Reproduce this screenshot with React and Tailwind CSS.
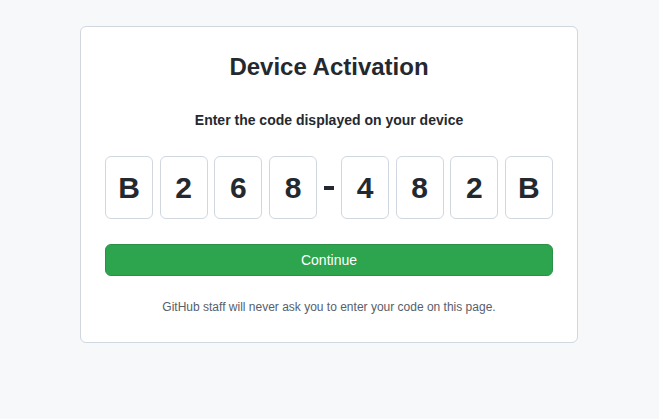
export default function App() {
  const left = ["B", "2", "6", "8"];
  const right = ["4", "8", "2", "B"];
  const Box = ({ c }) => (
    <div className="w-[48px] h-[63px] border border-[#d0d7de] rounded-[6px] bg-white flex items-center justify-center text-[30px] font-bold text-[#24292f]">
      {c}
    </div>
  );
  return (
    <div
      className="w-[659px] h-[419px] bg-[#f6f8fa] pt-[26px]"
      style={{ fontFamily: '"Liberation Sans", Arial, sans-serif' }}
    >
      <div className="ml-[80px] w-[498px] h-[317px] bg-white border border-[#d0d7de] rounded-[6px] px-[24px] pt-[25px]">
        <h1 className="text-center text-[24px] leading-[30px] font-bold text-[#24292f]">
          Device Activation
        </h1>
        <p className="mt-[28px] text-center text-[14px] leading-[21px] font-bold text-[#24292f]">
          Enter the code displayed on your device
        </p>
        <div className="mt-[25px] flex items-center">
          <div className="flex gap-[6.67px]">
            {left.map((c, i) => (
              <Box key={i} c={c} />
            ))}
          </div>
          <div className="w-[24px] flex justify-center">
            <div className="w-[10px] h-[4px] mt-[1px] bg-[#24292f]" />
          </div>
          <div className="flex gap-[6.67px]">
            {right.map((c, i) => (
              <Box key={i} c={c} />
            ))}
          </div>
        </div>
        <button className="mt-[25px] w-full h-[32px] bg-[#2da44e] border border-[#2a9147] rounded-[6px] text-white text-[14px] leading-[20px]">
          Continue
        </button>
        <p className="mt-[22px] text-center text-[12px] leading-[18px] text-[#57606a]">
          GitHub staff will never ask you to enter your code on this page.
        </p>
      </div>
    </div>
  );
}
